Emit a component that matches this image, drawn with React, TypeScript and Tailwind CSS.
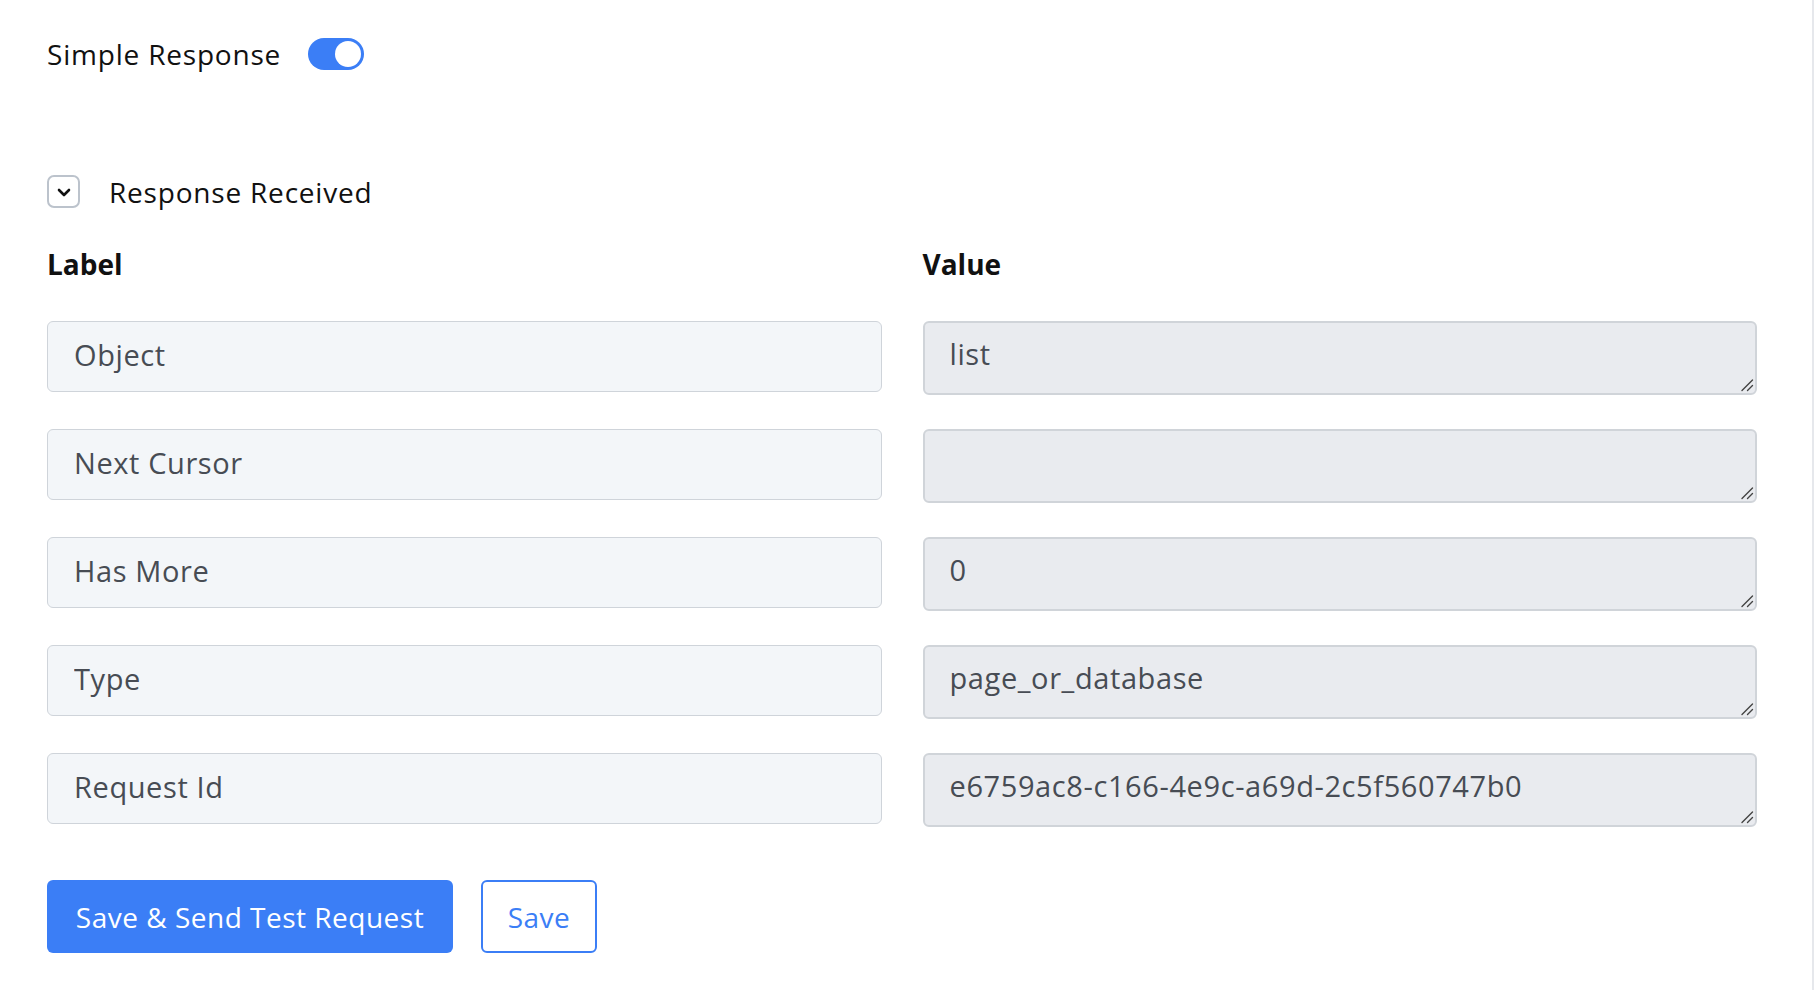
import { useState } from 'react'

const ROWS = [
  { label: 'Object', value: 'list' },
  { label: 'Next Cursor', value: '' },
  { label: 'Has More', value: '0' },
  { label: 'Type', value: 'page_or_database' },
  { label: 'Request Id', value: 'e6759ac8-c166-4e9c-a69d-2c5f560747b0' },
]

function Toggle({ on, onChange }: { on: boolean; onChange: (v: boolean) => void }) {
  return (
    <button
      onClick={() => onChange(!on)}
      className={`flex h-8 w-14 items-center rounded-full p-[3px] ${
        on ? 'justify-end bg-[#3b7ef6]' : 'justify-start bg-[#d1d5db]'
      }`}
    >
      <span className="h-[26px] w-[26px] rounded-full bg-white" />
    </button>
  )
}

function ChevronBox({ open, onClick }: { open: boolean; onClick: () => void }) {
  return (
    <button
      onClick={onClick}
      className="flex h-[33px] w-[33px] items-center justify-center rounded-[7px] border-2 border-[#bcc3cc] bg-white"
    >
      <svg width="16" height="16" viewBox="0 0 16 16" className={open ? '' : '-rotate-90'}>
        <path d="M3 6l5 5 5-5" fill="none" stroke="#111" strokeWidth="2.6" strokeLinecap="round" strokeLinejoin="round" />
      </svg>
    </button>
  )
}

// textarea with its own drawn resize grip in the corner
function ValueBox({ value }: { value: string }) {
  return (
    <div className="relative">
      <textarea
        readOnly
        value={value}
        rows={1}
        className="block h-[74px] w-full resize-none rounded-[6px] border-2 border-[#d0d4d9] bg-[#e9ebef] px-[25px] py-[10px] text-[29px] font-medium leading-[42px] tracking-[0.6px] text-[#474c54] outline-none"
      />
      <svg width="14" height="14" viewBox="0 0 14 14" className="pointer-events-none absolute bottom-[3px] right-[3px]">
        <path d="M12.5 2L2 12.5M12.5 7.5L7.5 12.5" stroke="#444" strokeWidth="1.4" strokeLinecap="round" />
      </svg>
    </div>
  )
}

export default function App() {
  const [simple, setSimple] = useState(true)
  const [open, setOpen] = useState(true)

  return (
    <div className="min-h-[990px] w-[1816px] bg-white font-['Open_Sans',sans-serif] text-[#111]">
      <div className="min-h-[990px] w-[1814px] border-r-2 border-[#e6e8ec] pl-[47px] pt-[38px]">
        <div className="flex h-8 items-center gap-[27px]">
          <span className="text-[28px] font-medium leading-8 tracking-[0.8px]">Simple Response</span>
          <Toggle on={simple} onChange={setSimple} />
        </div>

        <div className="mt-[105px] flex h-[33px] items-center gap-[29px]">
          <ChevronBox open={open} onClick={() => setOpen(!open)} />
          <span className="text-[28px] font-medium leading-8 tracking-[0.8px]">Response Received</span>
        </div>

        {open && (
          <div className="w-[1710px]">
            <div className="mt-[40px] grid grid-cols-2 gap-x-[41px]">
              <span className="text-[28px] font-bold leading-8">Label</span>
              <span className="text-[28px] font-bold leading-8">Value</span>
            </div>

            <div className="mt-[41px] grid grid-cols-2 items-start gap-x-[41px] gap-y-[34px]">
              {ROWS.map((r) => (
                <div key={r.label} className="contents">
                  <input
                    readOnly
                    value={r.label}
                    className="h-[71px] w-full rounded-[6px] border border-[#cfd4da] bg-[#f3f6f9] px-[26px] pb-[4px] text-[29px] font-medium tracking-[0.6px] text-[#474c54] outline-none"
                  />
                  <ValueBox value={r.value} />
                </div>
              ))}
            </div>
          </div>
        )}

        <div className="mt-[53px] flex gap-[28px]">
          <button className="h-[73px] w-[406px] rounded-[6px] bg-[#3b7ef6] text-[28px] font-medium tracking-[0.5px] text-white">
            Save &amp; Send Test Request
          </button>
          <button className="h-[73px] w-[116px] rounded-[6px] border-2 border-[#3b7ef6] bg-white text-[28px] font-medium tracking-[0.5px] text-[#3b7ef6]">
            Save
          </button>
        </div>
      </div>
    </div>
  )
}
